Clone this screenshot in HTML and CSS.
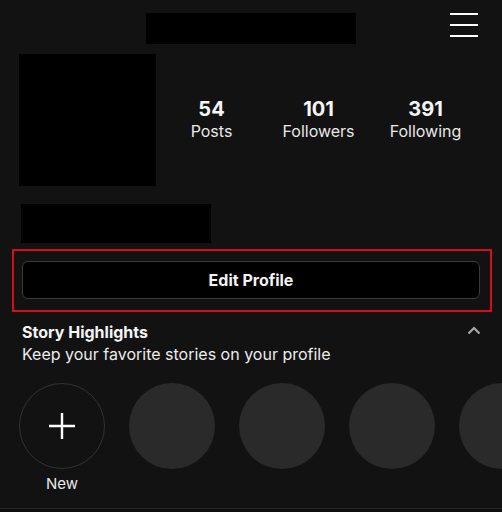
FILE: index.html
```html
<!DOCTYPE html>
<html lang="en">
  <head>
    <meta charset="UTF-8" />
    <meta name="viewport" content="width=device-width, initial-scale=1.0" />
    <title>Profile</title>
    <link rel="stylesheet" href="styles.css">
  </head>
  <body>
    <header class="top-bar">
      <div></div>
      <div class="username-block"></div>
      <button class="menu-btn" aria-label="Menu">
        <svg width="28" height="24" viewBox="0 0 28 24">
          <path d="M0 1h28M0 12h28M0 23h28" stroke="#fff" stroke-width="2" />
        </svg>
      </button>
    </header>

    <section class="profile-row">
      <div class="avatar"></div>
      <div class="stats">
        <div class="stat">
          <span class="stat-num">54</span>
          <span class="stat-label">Posts</span>
        </div>
        <div class="stat">
          <span class="stat-num">101</span>
          <span class="stat-label">Followers</span>
        </div>
        <div class="stat">
          <span class="stat-num">391</span>
          <span class="stat-label">Following</span>
        </div>
      </div>
    </section>

    <div class="name-block"></div>

    <div class="highlight-box">
      <button class="edit-btn">Edit Profile</button>
    </div>

    <section class="story-head">
      <div>
        <h2 class="story-title">Story Highlights</h2>
        <p class="story-sub">Keep your favorite stories on your profile</p>
      </div>
      <svg class="chevron" width="14" height="9" viewBox="0 0 14 9">
        <path d="M1.5 7.5L7 2l5.5 5.5" fill="none" stroke="#a8a8a8" stroke-width="2.2" />
      </svg>
    </section>

    <div class="stories">
      <div class="story">
        <div class="story-circle new">
          <svg width="26" height="26" viewBox="0 0 26 26">
            <path d="M13 0v26M0 13h26" stroke="#fff" stroke-width="2.4" />
          </svg>
        </div>
        <span class="story-label">New</span>
      </div>
      <div class="story"><div class="story-circle"></div></div>
      <div class="story"><div class="story-circle"></div></div>
      <div class="story"><div class="story-circle"></div></div>
      <div class="story"><div class="story-circle"></div></div>
    </div>
  </body>
</html>
```

FILE: styles.css
```css
html {
  margin: 0;
  background-color: #0f0f0f;
}
body {
  margin: 0;
  width: 502px;
  height: 508px;
  overflow: hidden;
  background-color: #121212;
  font-family: Inter, "Liberation Sans", sans-serif;
  color: #f5f5f5;
  border-bottom: 1px solid #262626;
}
.top-bar {
  display: grid;
  grid-template-columns: 1fr 210px 1fr;
  align-items: start;
  padding-top: 13px;
}
.username-block {
  height: 31px;
  background-color: #000;
}
.menu-btn {
  justify-self: end;
  margin-right: 24px;
  padding: 0;
  background: none;
  border: none;
  line-height: 0;
}
.profile-row {
  display: flex;
  align-items: center;
  margin-top: 10px;
  padding-left: 19px;
}
.avatar {
  width: 137px;
  height: 132px;
  background-color: #000;
}
.stats {
  display: flex;
  margin-left: 2px;
}
.stat {
  width: 107px;
  display: flex;
  flex-direction: column;
  align-items: center;
}
.stat-num {
  font-size: 20px;
  font-weight: 700;
  line-height: 22px;
}
.stat-label {
  font-size: 16px;
  line-height: 22px;
  color: #e8e8e8;
}
.name-block {
  width: 190px;
  height: 39px;
  margin: 18px 0 0 21px;
  background-color: #000;
}
.highlight-box {
  margin: 6px 10px 0 12px;
  padding: 10px 10px 11px 8px;
  border: 2px solid #d0101a;
}
.edit-btn {
  display: block;
  width: 100%;
  height: 38px;
  background-color: #000;
  border: 1px solid #3a3a3a;
  border-radius: 6px;
  color: #f2f2f2;
  font-family: inherit;
  font-size: 16px;
  font-weight: 700;
}
.story-head {
  display: flex;
  justify-content: space-between;
  align-items: flex-start;
  margin-top: 10px;
  padding: 0 21px 0 22px;
}
.story-title {
  margin: 0;
  font-size: 16px;
  font-weight: 700;
  line-height: 20px;
}
.story-sub {
  margin: 2px 0 0;
  font-size: 16px;
  line-height: 20px;
  color: #ececec;
}
.chevron {
  margin-top: 4px;
}
.stories {
  display: flex;
  gap: 24px;
  margin-top: 19px;
  padding-left: 19px;
  overflow: hidden;
}
.story {
  display: flex;
  flex-direction: column;
  align-items: center;
  flex-shrink: 0;
}
.story-circle {
  width: 86px;
  height: 86px;
  border-radius: 50%;
  background-color: #2a2a2a;
  box-sizing: border-box;
  display: flex;
  align-items: center;
  justify-content: center;
}
.story-circle.new {
  background-color: #121212;
  border: 1px solid #333;
}
.story-label {
  margin-top: 5px;
  font-size: 15px;
  line-height: 20px;
  color: #e8e8e8;
}
```
